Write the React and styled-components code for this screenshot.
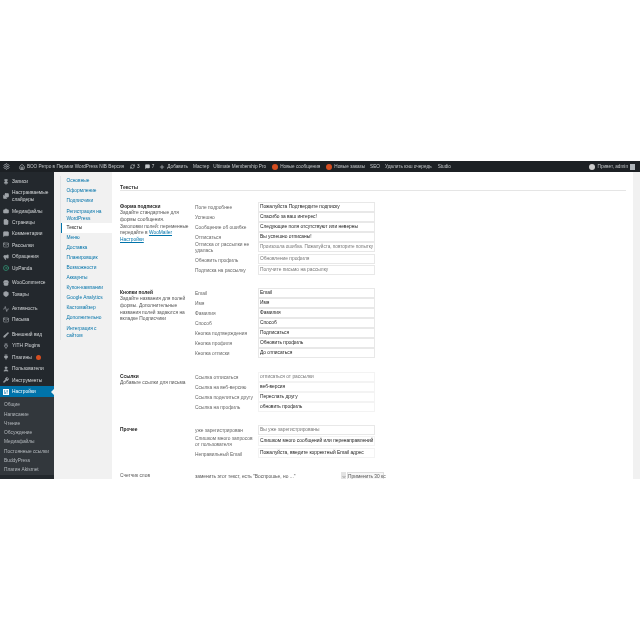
import styled, { createGlobalStyle } from 'styled-components';
import {
  Pin, Images, Camera, File, MessageSquare, Mail, Megaphone, CircleDot, Store, Package,
  Activity, Brush, Plug, User, Wrench, Home, RefreshCw, Plus, Settings, ChevronDown,
} from 'lucide-react';

const GlobalStyle = createGlobalStyle`
  html, body { margin: 0; padding: 0; background: #fff; }
  body { font-family: "Liberation Sans", Arial, sans-serif; font-size: 4.85px; color: #333; }
`;

const Page = styled.div`
  width: 640px;
  height: 640px;
  padding-top: 161px;
  box-sizing: border-box;
  background: #fff;
`;
const Frame = styled.div`
  height: 318px;
  display: flex;
  flex-direction: column;
  overflow: hidden;
  background: #f1f1f1;
  filter: blur(0.3px);
`;

const AdminBar = styled.div`
  flex: none;
  height: 11px;
  display: flex;
  align-items: center;
  padding: 0 3px;
  background: #1c2024;
  color: #c4c7ca;
  font-size: 4.7px;
  white-space: nowrap;
`;
const BarItem = styled.span`
  display: flex;
  align-items: center;
  gap: 2px;
  margin-right: ${p => p.$gap ?? 5}px;
`;
const BarDot = styled.span`
  width: 6px;
  height: 6px;
  border-radius: 50%;
  background: ${p => p.$color || '#d54e21'};
`;
const BarSpacer = styled.div`flex: 1;`;
const Avatar = styled.span`
  width: 5px;
  height: 6px;
  background: #aeb4b9;
`;

const Body = styled.div`
  flex: 1;
  display: flex;
  min-height: 0;
`;

const Sidebar = styled.nav`
  flex: none;
  width: 54px;
  padding-top: 4px;
  background: #23282d;
  color: #d5d8da;
`;
const MenuItem = styled.div`
  position: relative;
  display: flex;
  align-items: center;
  gap: 3px;
  min-height: 11.4px;
  padding: ${p => (p.$tall ? '2px' : '0')} 0 ${p => (p.$tall ? '2px' : '0')} 3px;
  margin-top: ${p => (p.$sep ? '3.2px' : '0')};
  box-sizing: border-box;
  line-height: 7px;
  background: ${p => (p.$active ? '#0073aa' : 'transparent')};
  color: ${p => (p.$active ? '#fff' : 'inherit')};
  white-space: nowrap;
  svg { flex: none; color: ${p => p.$iconColor || (p.$active ? '#fff' : '#9ea3a8')}; }
  ${p => p.$active && `
    &::after {
      content: '';
      position: absolute;
      right: 0;
      top: 3px;
      border: 3px solid transparent;
      border-right-color: #f1f1f1;
      border-left-width: 0;
    }
  `}
`;
const Badge = styled.span`
  width: 5px;
  height: 5px;
  margin-left: 1px;
  border-radius: 50%;
  background: #d54e21;
`;
const SubMenu = styled.div`
  padding: 3px 0 0 4px;
  background: #32373c;
  color: #b4b9be;
`;
const SubItem = styled.div`
  height: 9.3px;
  line-height: 9.3px;
  white-space: nowrap;
`;

const TabsColumn = styled.div`
  flex: none;
  width: 58px;
  padding: 4px 0 0 6px;
  box-sizing: border-box;
  background: #f1f1f1;
`;
const TabsInner = styled.div`
  border-left: 1px solid #e2e4e6;
`;
const Tab = styled.div`
  min-height: 10px;
  padding: ${p => (p.$tall ? '1.5px' : '0')} 0 ${p => (p.$tall ? '1.5px' : '0')} 5.5px;
  box-sizing: border-box;
  line-height: ${p => (p.$tall ? '7px' : '10px')};
  color: ${p => (p.$active ? '#222' : '#0073aa')};
  background: ${p => (p.$active ? '#fff' : 'transparent')};
  box-shadow: ${p => (p.$active ? 'inset 1px 0 0 #0073aa' : 'none')};
`;

const Main = styled.main`
  flex: 1;
  padding: 12px 7px 0 8px;
  background: #fff;
`;
const Title = styled.div`
  height: 6px;
  line-height: 6px;
  border-bottom: 1px solid #e5e5e5;
  font-size: 5.2px;
  font-weight: 700;
  color: #333;
  margin-bottom: 11px;
`;
const Section = styled.section`
  display: grid;
  grid-template-columns: 75px 1fr;
  margin-bottom: ${p => p.$gap || 13}px;
`;
const Intro = styled.div`
  padding-top: 1.5px;
  line-height: 6.7px;
  color: #555;
  white-space: nowrap;
`;
const IntroTitle = styled.div`
  font-weight: 700;
  color: #222;
`;
const IntroLink = styled.span`
  color: #0073aa;
  text-decoration: underline;
`;
const Rows = styled.div`
  display: flex;
  flex-direction: column;
`;
const Row = styled.div`
  display: grid;
  grid-template-columns: 63px 117px;
  height: ${p => p.$h || 10}px;
`;
const Label = styled.div`
  padding-top: ${p => p.$pad ?? 2}px;
  line-height: ${p => (p.$multi ? '6px' : '7px')};
  color: #666;
  white-space: pre;
`;
const Field = styled.div`
  height: 10px;
  line-height: 8.6px;
  padding: 0 1px;
  box-sizing: border-box;
  border: 1px solid ${p => (p.$soft ? '#f3f3f3' : '#e8e8e8')};
  background: #fff;
  color: ${p => (p.$dim ? '#777' : '#222')};
  font-size: ${p => (p.$tight ? '4.6px' : 'inherit')};
  white-space: nowrap;
  overflow: hidden;
`;
const LastRow = styled.div`
  display: flex;
  align-items: center;
  height: 10px;
`;
const SelectBox = styled.div`
  width: 151px;
  height: 10px;
  display: flex;
  align-items: center;
  justify-content: space-between;
  box-sizing: border-box;
  color: #555;
  white-space: nowrap;
`;
const SelectArrow = styled.span`
  width: 5px;
  height: 9px;
  display: flex;
  align-items: center;
  justify-content: center;
  background: #e3e3e3;
  color: #444;
`;
const Button = styled.div`
  margin-left: 1px;
  width: 37px;
  height: 10px;
  line-height: 8.6px;
  text-align: center;
  border: 1px solid #ddd;
  box-sizing: border-box;
  background: #f7f7f7;
  color: #555;
  white-space: nowrap;
`;
const RightBand = styled.div`
  flex: none;
  width: 7px;
  background: #f1f1f1;
`;

const SettingsBox = () => (
  <svg width="6" height="6" viewBox="0 0 6 6">
    <path fill="currentColor" fillRule="evenodd" d="M0 0h6v6H0zM1 1.5v1h1.2v-1zM3.4 1.5v1H5v-1zM1 3.5v1h2.4v-1zM4.4 3.5v1H5v-1z" />
  </svg>
);

const solid = { size: 6, strokeWidth: 2.4, fill: 'currentColor' };

const menu = [
  { icon: <Pin {...solid} />, text: 'Записи' },
  { icon: <Images {...solid} />, text: <>Настраиваемые<br />слайдеры</>, tall: true },
  { icon: <Camera {...solid} />, text: 'Медиафайлы' },
  { icon: <File {...solid} />, text: 'Страницы' },
  { icon: <MessageSquare {...solid} />, text: 'Комментарии' },
  { icon: <Mail size={6} strokeWidth={2.4} />, text: 'Рассылки' },
  { icon: <Megaphone {...solid} />, text: 'Обращения' },
  { icon: <CircleDot size={6} strokeWidth={2.6} />, text: 'UpPanda', iconColor: '#35a983' },
  { icon: <Store {...solid} />, text: 'WooCommerce', sep: true },
  { icon: <Package {...solid} />, text: 'Товары' },
  { icon: <Activity size={6} strokeWidth={2.6} />, text: 'Активность', sep: true },
  { icon: <Mail size={6} strokeWidth={2.4} />, text: 'Письма' },
  { icon: <Brush {...solid} />, text: 'Внешний вид', sep: true },
  { icon: <Plug size={6} strokeWidth={2.6} />, text: 'YITH Plugins' },
  { icon: <Plug {...solid} />, text: 'Плагины', badge: true },
  { icon: <User {...solid} />, text: 'Пользователи' },
  { icon: <Wrench {...solid} />, text: 'Инструменты' },
  { icon: <SettingsBox />, text: 'Настройки', active: true },
];
const subMenu = ['Общие', 'Написание', 'Чтение', 'Обсуждение', 'Медиафайлы', 'Постоянные ссылки', 'BuddyPress', 'Плагин Akismet'];
const tabs = [
  { text: 'Основные' }, { text: 'Оформление' }, { text: 'Подписчики' },
  { text: <>Регистрация на<br />WordPress</>, tall: true },
  { text: 'Тексты', active: true },
  { text: 'Меню' }, { text: 'Доставка' }, { text: 'Планировщик' }, { text: 'Возможности' },
  { text: 'Аккаунты' }, { text: 'Купон-кампании' }, { text: 'Google Analytics' },
  { text: 'Кастомайзер' }, { text: 'Дополнительно' },
  { text: <>Интеграция с<br />сайтом</>, tall: true },
];

const formRows = [
  { label: 'Поле подробнее', value: 'Пожалуйста Подтвердите подписку' },
  { label: 'Успешно', value: 'Спасибо за ваш интерес!' },
  { label: 'Сообщение об ошибке', value: 'Следующие поля отсутствуют или неверны' },
  { label: 'Отписаться', value: 'Вы успешно отписаны!' },
  { label: 'Отписка от рассылки не\nудалась', value: 'Произошла ошибка. Пожалуйста, повторите попытку', h: 12, multi: true, pad: 0, dim: true, tight: true },
  { label: 'Обновить профиль', value: 'Обновление профиля', h: 11, pad: 2.5, dim: true },
  { label: 'Подписка на рассылку', value: 'Получите письмо на рассылку', dim: true },
];
const fieldRows = [
  { label: 'Email', value: 'Email' },
  { label: 'Имя', value: 'Имя' },
  { label: 'Фамилия', value: 'Фамилия' },
  { label: 'Способ', value: 'Способ' },
  { label: 'Кнопка подтверждения', value: 'Подписаться' },
  { label: 'Кнопка профиля', value: 'Обновить профиль' },
  { label: 'Кнопка отписки', value: 'До отписаться' },
];
const linkRows = [
  { label: 'Ссылка отписаться', value: 'отписаться от рассылки', dim: true },
  { label: 'Ссылка на веб-версию', value: 'веб-версия' },
  { label: 'Ссылка поделиться другу', value: 'Переслать другу' },
  { label: 'Ссылка на профиль', value: 'обновить профиль' },
];
const otherRows = [
  { label: 'уже зарегистрирован', value: 'Вы уже зарегистрированы', h: 11.3, dim: true },
  { label: 'Слишком много запросов\nот пользователя', value: 'Слишком много сообщений или перенаправлений', h: 11.3, multi: true, pad: 0, soft: true },
  { label: 'Неправильный Email', value: 'Пожалуйста, введите корректный Email адрес', h: 10, pad: 3, soft: true },
];

const FormRows = ({ rows, soft }) => (
  <Rows>
    {rows.map(r => (
      <Row key={r.label} $h={r.h}>
        <Label $multi={r.multi} $pad={r.pad}>{r.label}</Label>
        <Field $soft={soft || r.soft} $dim={r.dim} $tight={r.tight}>{r.value}</Field>
      </Row>
    ))}
  </Rows>
);

const App = () => (
  <Page>
    <GlobalStyle />
    <Frame>
      <AdminBar>
        <BarItem $gap={9}><Settings size={7} color="#a0a5aa" strokeWidth={2.6} /></BarItem>
        <BarItem $gap={6}><Home size={6} strokeWidth={2.6} />ВОО Ретро в Пермии WordPress NIB Версия</BarItem>
        <BarItem><RefreshCw size={5} strokeWidth={2.6} />3</BarItem>
        <BarItem><MessageSquare size={5} strokeWidth={2.6} fill="currentColor" />7</BarItem>
        <BarItem><Plus size={6} strokeWidth={2.6} />Добавить</BarItem>
        <BarItem $gap={4}>Мастер</BarItem>
        <BarItem $gap={6}>Ultimate Membership Pro</BarItem>
        <BarItem $gap={6}><BarDot />Новые сообщения</BarItem>
        <BarItem><BarDot />Новые заказы</BarItem>
        <BarItem>SEO</BarItem>
        <BarItem $gap={6}>Удалить кэш очередь</BarItem>
        <BarItem>Studio</BarItem>
        <BarSpacer />
        <BarItem $gap={3}><BarDot $color="#ccc" /></BarItem>
        <BarItem $gap={2}>Привет, admin<Avatar /></BarItem>
      </AdminBar>
      <Body>
        <Sidebar>
          {menu.map((m, i) => (
            <MenuItem key={i} $tall={m.tall} $sep={m.sep} $active={m.active} $iconColor={m.iconColor}>
              {m.icon}
              <span>{m.text}</span>
              {m.badge && <Badge />}
            </MenuItem>
          ))}
          <SubMenu>
            {subMenu.map(s => <SubItem key={s}>{s}</SubItem>)}
          </SubMenu>
        </Sidebar>
        <TabsColumn>
          <TabsInner>
            {tabs.map((t, i) => (
              <Tab key={i} $tall={t.tall} $active={t.active}>{t.text}</Tab>
            ))}
          </TabsInner>
        </TabsColumn>
        <Main>
          <Title>Тексты</Title>
          <Section>
            <Intro>
              <IntroTitle>Форма подписки</IntroTitle>
              Задайте стандартные для<br />
              формы сообщения.<br />
              Заголовки полей: переменные<br />
              передайте в <IntroLink>WooMailer</IntroLink><br />
              <IntroLink>Настройки</IntroLink>
            </Intro>
            <FormRows rows={formRows} />
          </Section>
          <Section $gap={14}>
            <Intro>
              <IntroTitle>Кнопки полей</IntroTitle>
              Задайте названия для полей<br />
              формы. Дополнительные<br />
              названия полей задаются на<br />
              вкладке Подписчики
            </Intro>
            <FormRows rows={fieldRows} />
          </Section>
          <Section>
            <Intro>
              <IntroTitle>Ссылки</IntroTitle>
              Добавьте ссылки для письма
            </Intro>
            <FormRows rows={linkRows} soft />
          </Section>
          <Section $gap={14}>
            <Intro><IntroTitle>Прочее</IntroTitle></Intro>
            <FormRows rows={otherRows} />
          </Section>
          <Section>
            <Intro>Счетчик слов</Intro>
            <LastRow>
              <SelectBox>
                заменить этот текст, есть "Воспрошье, но ..."
                <SelectArrow><ChevronDown size={4} strokeWidth={3} /></SelectArrow>
              </SelectBox>
              <Button>Применить 30 кс</Button>
            </LastRow>
          </Section>
        </Main>
        <RightBand />
      </Body>
    </Frame>
  </Page>
);

export default App;
